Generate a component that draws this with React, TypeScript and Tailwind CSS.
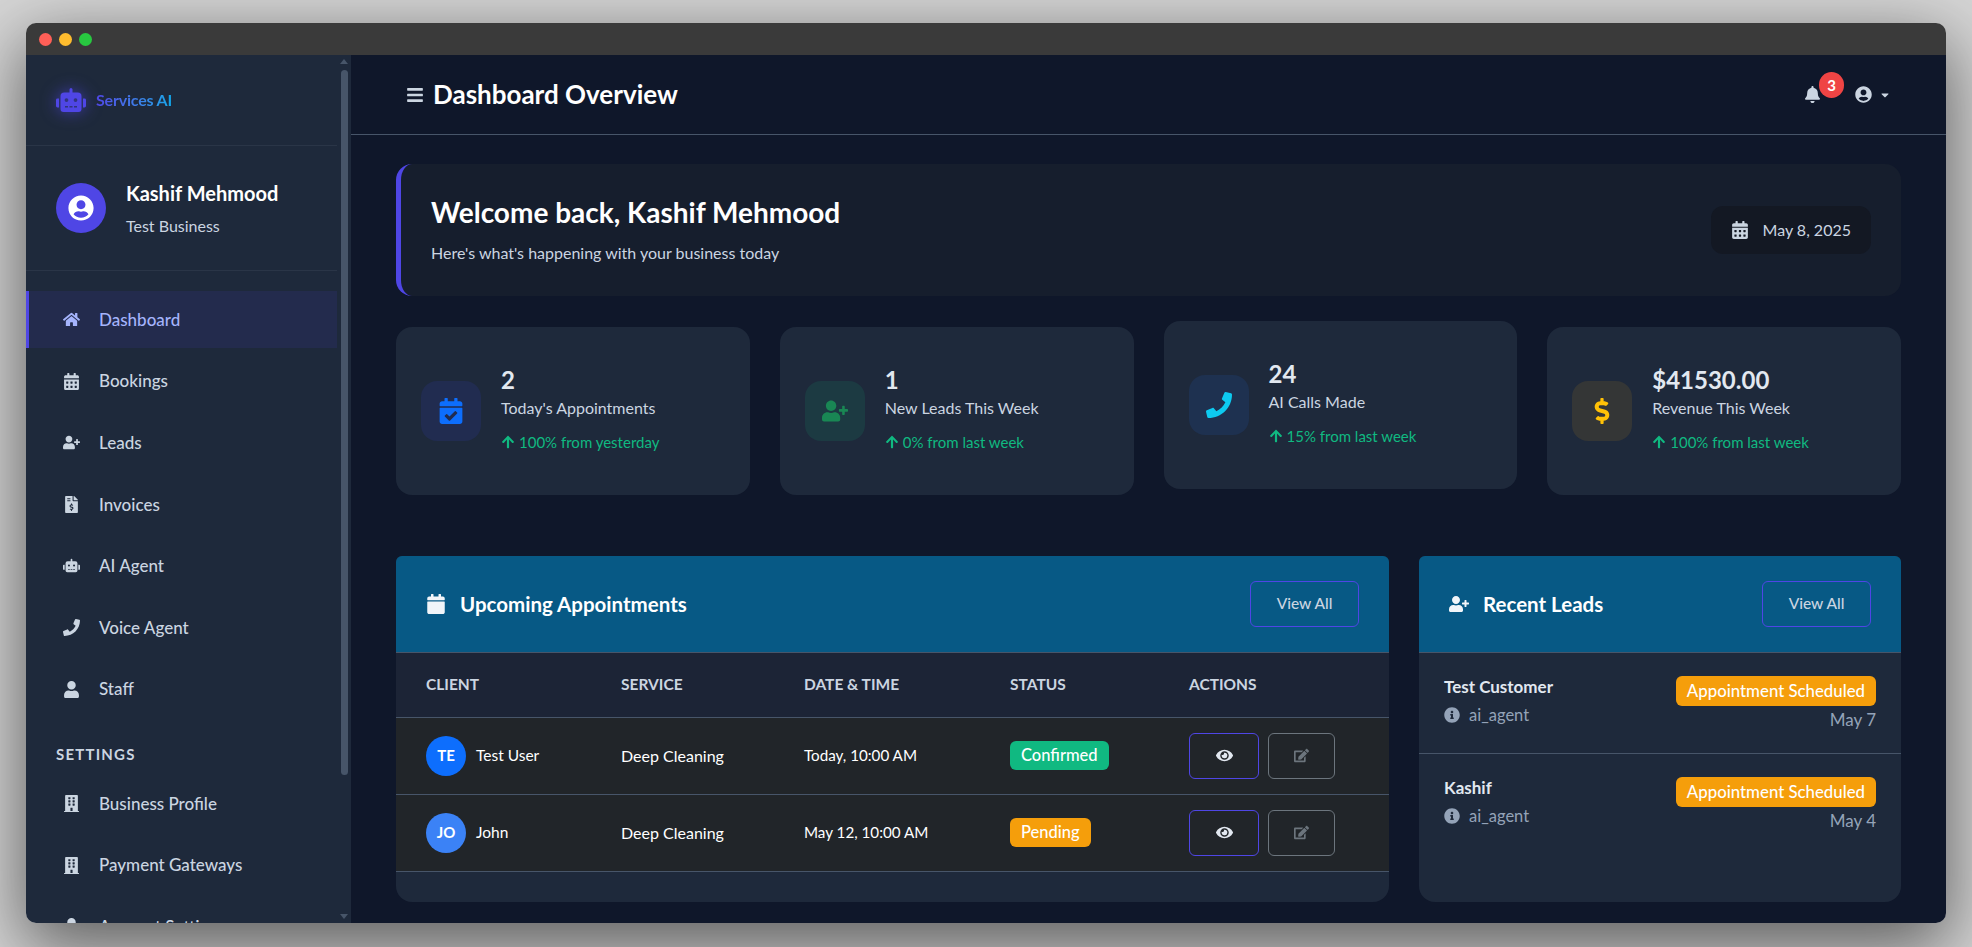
import { IconType } from "react-icons"
import {
  FaArrowUp,
  FaBars,
  FaBell,
  FaBuilding,
  FaCalendar,
  FaCalendarAlt,
  FaCalendarCheck,
  FaCaretDown,
  FaDollarSign,
  FaEdit,
  FaEye,
  FaFileInvoiceDollar,
  FaHome,
  FaInfoCircle,
  FaPhone,
  FaRobot,
  FaUser,
  FaUserCircle,
  FaUserPlus,
} from "react-icons/fa"

const font = { fontFamily: '"Lato", "Noto Sans", sans-serif' }

const mainNav: { label: string; icon: IconType; active?: boolean }[] = [
  { label: "Dashboard", icon: FaHome, active: true },
  { label: "Bookings", icon: FaCalendarAlt },
  { label: "Leads", icon: FaUserPlus },
  { label: "Invoices", icon: FaFileInvoiceDollar },
  { label: "AI Agent", icon: FaRobot },
  { label: "Voice Agent", icon: FaPhone },
  { label: "Staff", icon: FaUser },
]

const settingsNav: { label: string; icon: IconType }[] = [
  { label: "Business Profile", icon: FaBuilding },
  { label: "Payment Gateways", icon: FaBuilding },
  { label: "Account Settings", icon: FaUser },
]

const stats = [
  { value: "2", label: "Today's Appointments", trend: "100% from yesterday", icon: FaCalendarCheck, tile: "bg-[#212c50]", color: "text-[#0d6efd]", lifted: false },
  { value: "1", label: "New Leads This Week", trend: "0% from last week", icon: FaUserPlus, tile: "bg-[#1c3a42]", color: "text-[#198754]", lifted: false },
  { value: "24", label: "AI Calls Made", trend: "15% from last week", icon: FaPhone, tile: "bg-[#1e3150]", color: "text-[#0dcaf0]", lifted: true },
  { value: "$41530.00", label: "Revenue This Week", trend: "100% from last week", icon: FaDollarSign, tile: "bg-[#343636]", color: "text-[#ffc107]", lifted: false },
]

const appointments = [
  { initials: "TE", name: "Test User", service: "Deep Cleaning", when: "Today, 10:00 AM", status: "Confirmed", badge: "bg-[#10b981]", avatar: "bg-[#0d6efd]" },
  { initials: "JO", name: "John", service: "Deep Cleaning", when: "May 12, 10:00 AM", status: "Pending", badge: "bg-[#f59e0b]", avatar: "bg-[#3b82f6]" },
]

const leads = [
  { name: "Test Customer", date: "May 7" },
  { name: "Kashif", date: "May 4" },
]

function NavItem({ label, icon: Icon, active }: { label: string; icon: IconType; active?: boolean }) {
  return (
    <div className={`flex h-[57px] items-center border-l-[3px] pl-[30px] ${active ? "border-[#4f46e5] bg-[#232b4d] text-[#a5b4fc]" : "border-transparent text-[#cbd5e1]"}`}>
      <span className="flex w-[24px] justify-center">
        <Icon className="h-[17px] w-auto" />
      </span>
      <span className="ml-[16px] text-[17px] font-medium">{label}</span>
    </div>
  )
}

function Sidebar() {
  return (
    <aside className="flex w-[325px] shrink-0 bg-[#1e293b]">
      <div className="w-[311px] shrink-0 overflow-hidden">
        <div className="flex h-[91px] items-center gap-[10px] border-b border-[#2a3547] pl-[30px]">
          <FaRobot className="h-[30px] w-auto text-[#4f46e5] drop-shadow-[0_0_8px_rgba(79,70,229,0.7)]" />
          <span className="bg-gradient-to-r from-[#4f46e5] to-[#0ea5e9] bg-clip-text text-[16px] font-bold tracking-[-0.2px] text-transparent">Services AI</span>
        </div>
        <div className="flex h-[125px] items-center gap-[20px] border-b border-[#2a3547] pl-[30px]">
          <div className="flex h-[50px] w-[50px] items-center justify-center rounded-full bg-[#4f46e5]">
            <FaUserCircle className="h-[26px] w-auto text-white" />
          </div>
          <div>
            <div className="text-[20px] font-bold leading-[24px] text-white">Kashif Mehmood</div>
            <div className="mt-[11px] text-[16px] leading-[20px] text-[#cbd5e1]">Test Business</div>
          </div>
        </div>
        <nav className="flex flex-col gap-[4.6px] pt-[20px]">
          {mainNav.map((item) => (
            <NavItem key={item.label} {...item} />
          ))}
        </nav>
        <div className="pb-[10px] pl-[30px] pt-[25px] text-[15px] font-bold tracking-[1.2px] text-[#cbd5e1]">SETTINGS</div>
        <nav className="flex flex-col gap-[4.6px]">
          {settingsNav.map((item) => (
            <NavItem key={item.label} {...item} />
          ))}
        </nav>
      </div>
      <div className="flex w-[14px] flex-col items-center justify-between py-[4px]">
        <div className="flex flex-col items-center">
          <div className="h-0 w-0 border-x-[4px] border-b-[5px] border-x-transparent border-b-[#475569]" />
          <div className="mt-[6px] h-[705px] w-[7px] rounded-full bg-[#475569]" />
        </div>
        <div className="h-0 w-0 border-x-[4px] border-t-[5px] border-x-transparent border-t-[#475569]" />
      </div>
    </aside>
  )
}

function TopBar() {
  return (
    <header className="flex h-[80px] shrink-0 items-center justify-between border-b border-[#475569] pl-[55px] pr-[55px]">
      <div className="flex items-center gap-[9px] text-white">
        <FaBars className="h-[18px] w-auto text-[#cbd5e1]" />
        <h1 className="text-[26px] font-bold">Dashboard Overview</h1>
      </div>
      <div className="flex items-center text-[#cbd5e1]">
        <div className="relative mr-[34px]">
          <FaBell className="h-[17px] w-auto" />
          <span className="absolute left-[15px] top-[-14px] flex h-[26px] w-[25px] items-center justify-center rounded-full bg-[#ef4444] text-[15px] font-bold text-white">3</span>
        </div>
        <FaUserCircle className="h-[17px] w-auto" />
        <FaCaretDown className="ml-[7px] h-[12px] w-auto" />
      </div>
    </header>
  )
}

function WelcomeBanner() {
  return (
    <section className="flex h-[132px] items-center justify-between rounded-[16px] border-l-[5px] border-[#4f46e5] bg-[#161e2d] pl-[30px] pr-[30px]">
      <div>
        <h2 className="mt-[-3px] text-[28px] font-bold leading-[36px] text-white">Welcome back, Kashif Mehmood</h2>
        <p className="mt-[13px] text-[16px] leading-[20px] text-[#cbd5e1]">Here's what's happening with your business today</p>
      </div>
      <div className="flex h-[48px] items-center gap-[14px] rounded-[12px] bg-[#131823] px-[20px] text-[#cbd5e1]">
        <FaCalendarAlt className="h-[18px] w-auto" />
        <span className="text-[16px]">May 8, 2025</span>
      </div>
    </section>
  )
}

function StatCard({ value, label, trend, icon: Icon, tile, color, lifted }: (typeof stats)[number]) {
  return (
    <div className={`flex h-[168px] items-center rounded-[16px] bg-[#1e293b] pl-[25px] ${lifted ? "-translate-y-[6px]" : ""}`}>
      <div className={`flex h-[60px] w-[60px] shrink-0 items-center justify-center rounded-[16px] ${tile}`}>
        <Icon className={`h-[26px] w-auto ${color}`} />
      </div>
      <div className="ml-[20px] mt-[-4px]">
        <div className="mt-[-2px] text-[24px] font-bold leading-[32px] text-[#e2e8f0]">{value}</div>
        <div className="text-[16px] leading-[24px] text-[#cbd5e1]">{label}</div>
        <div className="mt-[12px] flex items-center gap-[4px] text-[15px] leading-[20px] text-[#10b981]">
          <FaArrowUp className="h-[14px] w-auto" />
          {trend}
        </div>
      </div>
    </div>
  )
}

function ViewAll() {
  return (
    <button className="flex h-[46px] w-[109px] items-center justify-center rounded-[6px] border border-[#4f46e5] text-[15.5px] font-medium text-[#cbd5e1]">View All</button>
  )
}

function PanelHeader({ icon: Icon, title }: { icon: IconType; title: string }) {
  return (
    <div className="flex h-[97px] shrink-0 items-center justify-between rounded-t-[6px] border-b border-[#475569] bg-[#075985] px-[30px]">
      <div className="flex items-center gap-[14px]">
        <Icon className="h-[20px] w-auto text-[#f1f5f9]" />
        <h3 className="text-[20.5px] font-bold text-white">{title}</h3>
      </div>
      <ViewAll />
    </div>
  )
}

function AppointmentsPanel() {
  return (
    <section className="flex flex-1 flex-col rounded-[16px] rounded-t-[6px] bg-[#1e293b]">
      <PanelHeader icon={FaCalendar} title="Upcoming Appointments" />
      <table className="w-full table-fixed text-left">
        <thead>
          <tr className="h-[64px] border-b border-[#475569] bg-[#1c2436] text-[15.5px] text-[#cbd5e1]">
            <th className="w-[225px] pl-[30px] font-bold">CLIENT</th>
            <th className="w-[183px] font-bold">SERVICE</th>
            <th className="w-[206px] font-bold">DATE &amp; TIME</th>
            <th className="w-[179px] font-bold">STATUS</th>
            <th className="font-bold">ACTIONS</th>
          </tr>
        </thead>
        <tbody>
          {appointments.map((row) => (
            <tr key={row.name} className="h-[77px] border-b border-[#475569] bg-[#212529] text-white">
              <td className="pl-[30px] text-[15.5px]">
                <div className="flex items-center gap-[10px]">
                  <span className={`flex h-[40px] w-[40px] items-center justify-center rounded-full text-[15px] font-bold ${row.avatar}`}>{row.initials}</span>
                  {row.name}
                </div>
              </td>
              <td className="text-[16px]">{row.service}</td>
              <td className="text-[15.2px]">{row.when}</td>
              <td>
                <span className={`inline-flex h-[29px] items-center rounded-[6px] px-[11px] text-[16.5px] font-medium ${row.badge}`}>{row.status}</span>
              </td>
              <td>
                <div className="flex gap-[9px]">
                  <button className="flex h-[46px] w-[70px] items-center justify-center rounded-[6px] border border-[#4f46e5] text-[#e2e8f0]">
                    <FaEye className="h-[17px] w-auto" />
                  </button>
                  <button className="flex h-[46px] w-[67px] items-center justify-center rounded-[6px] border border-[#6c757d] text-[#6c757d]">
                    <FaEdit className="h-[15px] w-auto" />
                  </button>
                </div>
              </td>
            </tr>
          ))}
        </tbody>
      </table>
    </section>
  )
}

function LeadsPanel() {
  return (
    <section className="flex w-[482px] shrink-0 flex-col rounded-[16px] rounded-t-[6px] bg-[#1e293b]">
      <PanelHeader icon={FaUserPlus} title="Recent Leads" />
      {leads.map((lead, i) => (
        <div key={lead.name} className={`flex h-[101px] justify-between pl-[25px] pr-[25px] pt-[23px] ${i === 0 ? "border-b border-[#475569]" : ""}`}>
          <div className="mt-[1px]">
            <div className="text-[17px] font-bold leading-[20px] text-[#e2e8f0]">{lead.name}</div>
            <div className="mt-[8px] flex items-center gap-[9px] text-[16.5px] leading-[20px] text-[#94a3b8]">
              <FaInfoCircle className="h-[16px] w-auto" />
              ai_agent
            </div>
          </div>
          <div className="flex flex-col items-end">
            <span className="flex h-[30px] items-center rounded-[6px] bg-[#f59e0b] px-[11px] text-[16.8px] font-medium text-white">Appointment Scheduled</span>
            <span className="mt-[3px] text-[17px] leading-[22px] text-[#94a3b8]">{lead.date}</span>
          </div>
        </div>
      ))}
    </section>
  )
}

export default function App() {
  return (
    <div className="h-[947px] overflow-hidden bg-[#d6d6d6] pl-[26px] pt-[23px]" style={font}>
      <div className="flex h-[900px] w-[1920px] flex-col overflow-hidden rounded-[10px] shadow-[0_22px_70px_4px_rgba(0,0,0,0.56)]">
        <div className="flex h-[32px] shrink-0 items-center gap-[7px] bg-[#3a3a3a] pl-[13px]">
          <span className="h-[13px] w-[13px] rounded-full bg-[#ff5f57]" />
          <span className="h-[13px] w-[13px] rounded-full bg-[#febc2e]" />
          <span className="h-[13px] w-[13px] rounded-full bg-[#28c840]" />
        </div>
        <div className="flex min-h-0 flex-1">
          <Sidebar />
          <main className="flex min-w-0 flex-1 flex-col bg-[#0f172a]">
            <TopBar />
            <div className="flex flex-col pl-[45px] pr-[45px] pt-[29px]">
              <WelcomeBanner />
              <div className="mt-[31px] grid grid-cols-4 gap-[30px]">
                {stats.map((s) => (
                  <StatCard key={s.label} {...s} />
                ))}
              </div>
              <div className="mt-[61px] flex h-[346px] gap-[30px]">
                <AppointmentsPanel />
                <LeadsPanel />
              </div>
            </div>
          </main>
        </div>
      </div>
    </div>
  )
}
